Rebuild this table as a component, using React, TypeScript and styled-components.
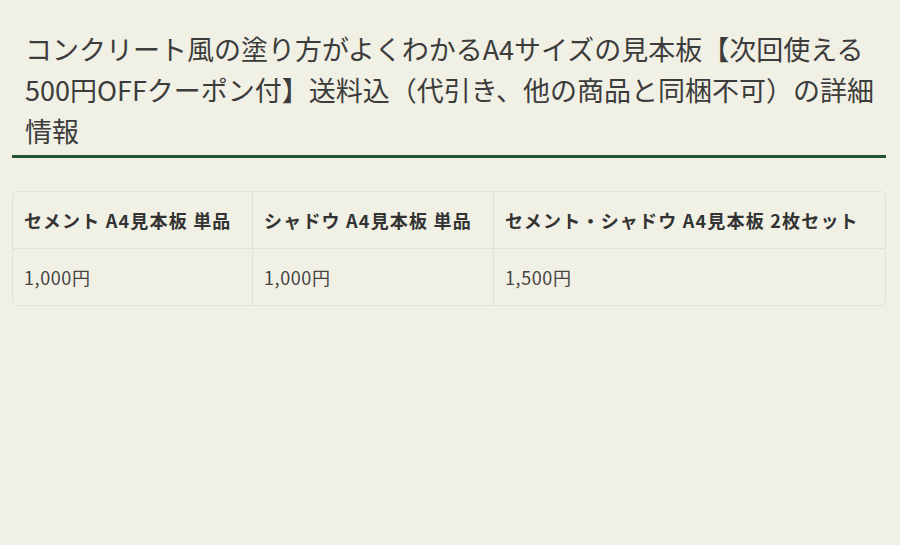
import React from "react";
import styled, { createGlobalStyle } from "styled-components";

const pageBg = "#f1f0e5";
const lineColor = "#e3e2d6";
const green = "#1f5630";

const GlobalStyle = createGlobalStyle`
  body {
    margin: 0;
    background: ${pageBg};
    font-family: "Noto Sans CJK JP", "Noto Sans", sans-serif;
    color: #3a3a3a;
  }
`;

const Page = styled.div`
  padding: 28px 14px 0 12px;
`;

const Title = styled.h2`
  margin: 0 0 33px 0;
  padding: 0 0 4px 13px;
  font-size: 27px;
  font-weight: 400;
  line-height: 41px;
  color: #3c3c3c;
  border-bottom: 3px solid ${green};
`;

const Table = styled.table`
  width: 100%;
  table-layout: fixed;
  border-collapse: separate;
  border-spacing: 0;
  border: 1px solid ${lineColor};
  border-radius: 5px;
`;

const Col = styled.col<{ $w?: number }>`
  width: ${(p) => (p.$w ? `${p.$w}px` : "auto")};
`;

const Cell = styled.td<{ $head?: boolean; $last?: boolean }>`
  height: 56px;
  padding: 0 11px;
  font-size: 18px;
  font-weight: ${(p) => (p.$head ? 700 : 400)};
  letter-spacing: ${(p) => (p.$head ? "1.2px" : "0.6px")};
  color: ${(p) => (p.$head ? "#333" : "#444")};
  text-align: left;
  white-space: nowrap;
  border-right: ${(p) => (p.$last ? "none" : `1px solid ${lineColor}`)};
  border-bottom: ${(p) => (p.$head ? `1px solid ${lineColor}` : "none")};
`;

const rows = [
  ["セメント A4見本板 単品", "1,000円"],
  ["シャドウ A4見本板 単品", "1,000円"],
  ["セメント・シャドウ A4見本板 2枚セット", "1,500円"],
];

const App = () => {
  return (
    <Page>
      <GlobalStyle />
      <Title>
        コンクリート風の塗り方がよくわかるA4サイズの見本板【次回使える500円OFFクーポン付】送料込（代引き、他の商品と同梱不可）の詳細情報
      </Title>
      <Table>
        <colgroup>
          <Col $w={240} />
          <Col $w={241} />
          <Col />
        </colgroup>
        <tbody>
          <tr>
            {rows.map((r, i) => (
              <Cell as="th" key={r[0]} $head $last={i === rows.length - 1}>
                {r[0]}
              </Cell>
            ))}
          </tr>
          <tr>
            {rows.map((r, i) => (
              <Cell key={r[0]} $last={i === rows.length - 1}>
                {r[1]}
              </Cell>
            ))}
          </tr>
        </tbody>
      </Table>
    </Page>
  );
};

export default App;
